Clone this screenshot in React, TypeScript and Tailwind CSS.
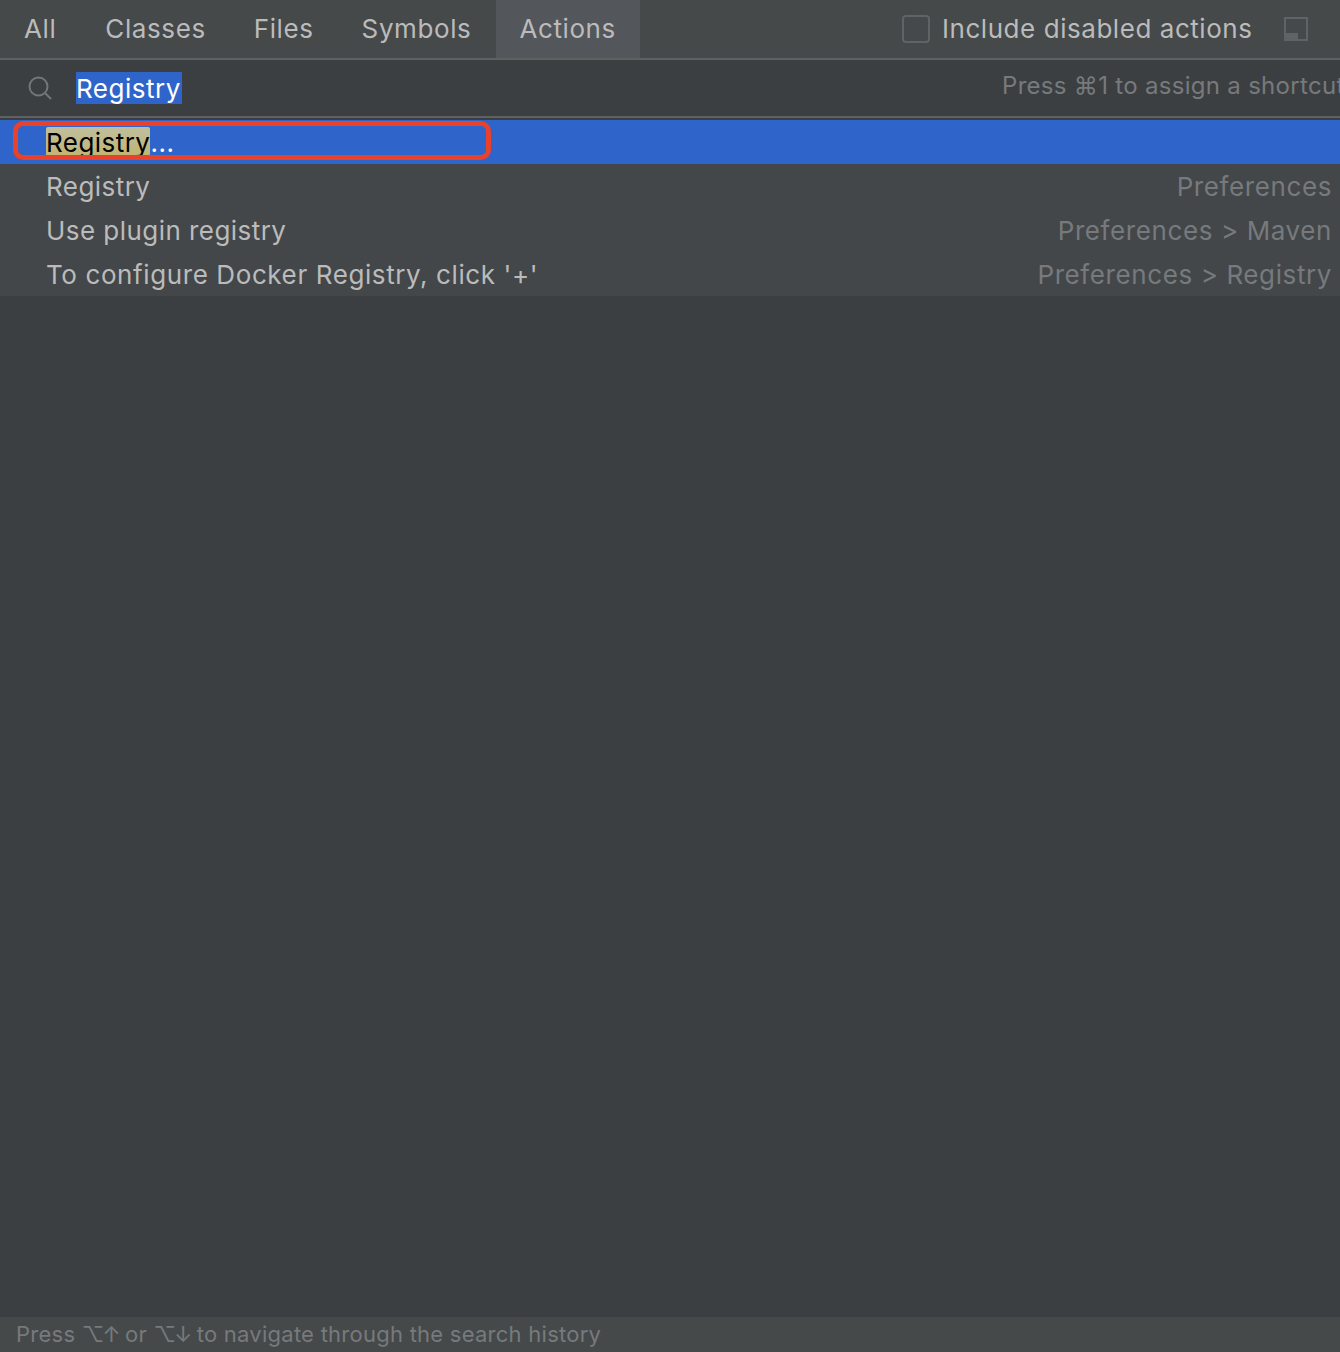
const font = { fontFamily: 'Inter, "Noto Sans", sans-serif' };

function Tab({ label }: { label: string }) {
  return <div className="flex h-full items-center px-6 text-[#bbbbbb]">{label}</div>;
}

function Row({ left, right, tight }: { left: string; right: string; tight?: boolean }) {
  return (
    <div className="flex h-11 items-center justify-between bg-[#43474a] pl-[46px] pr-2 pt-0.5">
      <span className={tight ? "tracking-[0.45px] text-[#bbbbbb]" : "text-[#bbbbbb]"}>{left}</span>
      <span className="text-[#777a7c]">{right}</span>
    </div>
  );
}

export default function App() {
  return (
    <div style={font} className="relative flex h-[1352px] w-[1340px] flex-col overflow-hidden bg-[#3c3f41] text-[26px] leading-8 tracking-[0.6px]">
      <div className="flex h-[60px] shrink-0 items-stretch border-b-2 border-[#5f6161] bg-[#45494a]">
        <div className="flex h-[58px]">
          <div className="flex h-full items-center pl-6 pr-[25px] text-[#bbbbbb]">All</div>
          <Tab label="Classes" />
          <Tab label="Files" />
          <Tab label="Symbols" />
          <div className="ml-px flex h-full w-[144px] items-center bg-[#53565a] pl-[23px] text-[#bbbbbb]">Actions</div>
        </div>
        <div className="ml-auto flex items-center pr-[32px]">
          <div className="h-7 w-7 rounded-[4px] border-2 border-[#5f6365] bg-[#45494a]" />
          <span className="ml-[12px] w-[310px] whitespace-nowrap tracking-[0.55px] text-[#bbbbbb]">Include disabled actions</span>
          <svg className="ml-[32px]" width="24" height="24" viewBox="0 0 24 24">
            <rect x="1" y="1" width="22" height="22" fill="none" stroke="#5f6365" strokeWidth="2" />
            <rect x="0" y="16" width="14" height="8" fill="#5f6365" />
          </svg>
        </div>
      </div>
      <div className="flex h-[58px] shrink-0 items-center overflow-hidden border-b-2 border-[#5f6161] bg-[#3c3f41]">
        <svg className="ml-[27px] shrink-0" width="26" height="26" viewBox="0 0 26 26" fill="none" stroke="#72777a" strokeWidth="2">
          <circle cx="11.5" cy="11.5" r="9" />
          <path d="M18 18l6 6" />
        </svg>
        <span className="ml-[23px] flex h-8 w-[106px] shrink-0 items-center bg-[#2f65ca] pt-0.5 tracking-[0.5px] text-white">Registry</span>
        <span className="ml-[820px] shrink-0 -translate-y-[2px] text-[24px] tracking-[0.3px] text-[#777a7c]">Press ⌘1 to assign a shortcut</span>
      </div>
      <div className="mt-0.5 flex h-11 shrink-0 items-center bg-[#2f65ca] pl-[46px] pt-0.5">
        <span className="rounded-t-[2px] bg-gradient-to-b from-[#bfbf9f] to-[#c2b46c] tracking-[0.45px] text-black">Registry</span>
        <span className="text-white">...</span>
      </div>
      <Row left="Registry" right="Preferences" tight />
      <Row left="Use plugin registry" right="Preferences > Maven" tight />
      <Row left="To configure Docker Registry, click '+'" right="Preferences > Registry" />
      <div className="flex-1" />
      <div className="flex h-[35px] shrink-0 items-center whitespace-pre bg-[#45494a] pb-0.5 pl-4 text-[22px] tracking-[0.25px] text-[#777a7c]">
        <span>Press </span>
        <span className="tracking-[-2px]">⌥↑</span>
        <span> or </span>
        <span className="tracking-[-2px]">⌥↓</span>
        <span> to navigate through the search history</span>
      </div>
      <div className="absolute left-[13px] top-[121px] h-[39px] w-[478px] rounded-[10px] border-[5px] border-[#e8412c]" />
    </div>
  );
}
